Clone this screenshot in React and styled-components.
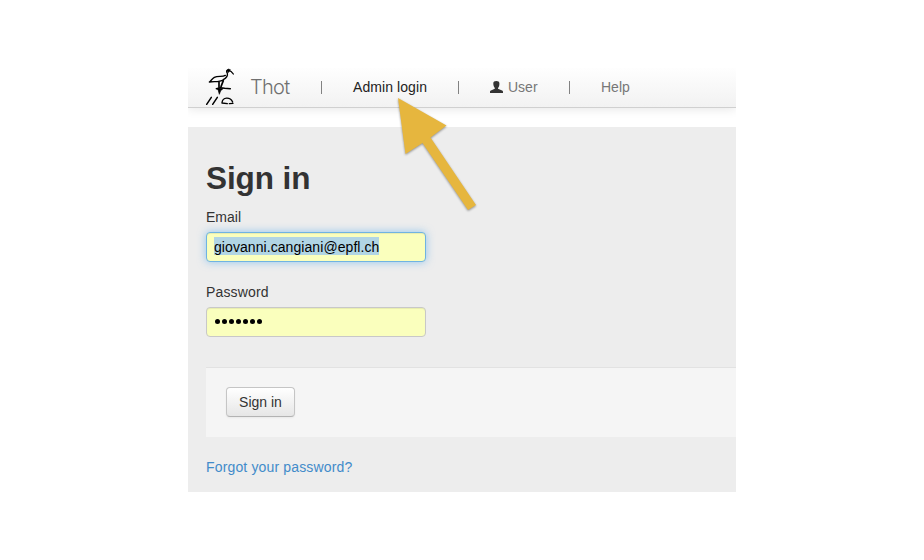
import React from "react";
import styled, { createGlobalStyle } from "styled-components";

const GlobalStyle = createGlobalStyle`
  * { box-sizing: border-box; }
  body {
    margin: 0;
    background: #fff;
    color: #333;
    font: 14px/20px "Liberation Sans", Arial, sans-serif;
  }
`;

const Page = styled.div`
  height: 560px;
  padding: 68px 188px 0;
  overflow: hidden;
`;

const Screen = styled.div`
  position: relative;
  width: 548px;
  height: 424px;
`;

const Viewport = styled.div`
  height: 100%;
  display: flex;
  flex-direction: column;
  overflow: hidden;
`;

const Navbar = styled.nav`
  display: flex;
  align-items: center;
  flex: none;
  height: 40px;
  padding: 0 0 2px 16px;
  color: #777;
  background: linear-gradient(#fefefe, #f2f2f2);
  border-bottom: 1px solid #d0d0d0;
  box-shadow: 0 1px 10px rgba(0, 0, 0, 0.1);
`;

const Logo = styled.svg`
  width: 32px;
  height: 40px;
  flex: none;
`;

const Brand = styled.span`
  width: 71px;
  margin-left: 14px;
  font-family: Inter, sans-serif;
  font-size: 20px;
  font-weight: 300;
  letter-spacing: -0.7px;
  color: #707070;
`;

const NavItem = styled.span`
  display: flex;
  align-items: center;
  width: ${(p) => p.$width}px;
  white-space: nowrap;
  letter-spacing: ${(p) => p.$spacing || 0}px;
  color: ${(p) => (p.$active ? "#222" : "#777")};
`;

const Divider = styled.span`
  width: 1px;
  height: 13px;
  margin: 1px 31px 0 0;
  background: #828282;
`;

const UserIcon = styled.svg`
  width: 13px;
  height: 12px;
  margin: 0 5px 0 0;
`;

const Panel = styled.main`
  flex: 1;
  margin-top: 19px;
  padding: 31px 0 0 18px;
  background: #ededed;
`;

const Title = styled.h1`
  margin: 0 0 9px;
  font-size: 31.5px;
  line-height: 40px;
  letter-spacing: -0.1px;
`;

const Field = styled.div`
  margin-bottom: 20px;
`;

const Label = styled.label`
  display: block;
  margin-bottom: 5px;
  letter-spacing: ${(p) => p.$spacing || 0}px;
`;

const Input = styled.div`
  display: flex;
  align-items: center;
  width: 220px;
  height: 30px;
  padding: 0 7px;
  color: #000;
  background: #faffbd;
  border: 1px solid ${(p) => (p.$focused ? "#6fb3e2" : "#c8c8c8")};
  border-radius: 4px;
  box-shadow: ${(p) =>
    p.$focused
      ? "inset 0 1px 1px rgba(0,0,0,.075), 0 0 8px rgba(82,168,236,.6)"
      : "inset 0 1px 1px rgba(0,0,0,.075)"};
`;

const Selection = styled.span`
  height: 18px;
  margin-bottom: 2px;
  line-height: 20px;
  letter-spacing: 0.07px;
  background: #b1d5e4;
`;

const Mask = styled.span`
  display: flex;
  gap: 1.6px;
  padding: 0 0 1px 1px;
`;

const Dot = styled.i`
  width: 5.4px;
  height: 5.4px;
  border-radius: 50%;
  background: #000;
`;

const Actions = styled.div`
  height: 70px;
  margin: 30px 0 20px;
  padding: 19px 20px;
  background: #f5f5f5;
  border-top: 1px solid #e2e2e2;
`;

const Button = styled.button`
  display: block;
  width: 69px;
  height: 30px;
  padding: 0;
  color: #333;
  font: inherit;
  background: linear-gradient(#fff, #e6e6e6);
  border: 1px solid #c5c5c5;
  border-bottom-color: #b3b3b3;
  border-radius: 4px;
  box-shadow: 0 1px 2px rgba(0, 0, 0, 0.05);
`;

const Link = styled.a`
  display: block;
  color: #428bca;
  letter-spacing: 0.15px;
`;

const Arrow = styled.svg`
  position: absolute;
  left: 202px;
  top: 22px;
  width: 100px;
  height: 130px;
  filter: drop-shadow(0 1px 1px rgba(0, 0, 0, 0.4));
`;

export default function App() {
  return (
    <>
      <GlobalStyle />
      <Page>
        <Screen>
          <Viewport>
            <Navbar>
              <Logo viewBox="54 21 96 120" fill="none" stroke="#000" strokeWidth="4" strokeLinecap="round" strokeLinejoin="round">
                <path d="M142 42 C138 36 133 32 128 31 C122 29 120 34 124 40 C126 47 120 54 112 59 C101 67 88 64 70 66 C76 62 77 57 85 52 C96 46 109 52 118 46" />
                <path d="M122 34 L126 27 L133 29 L128 37 Z" fill="#000" strokeWidth="2" />
                <path d="M99 66 L99 82 M112 62 L105 80" strokeWidth="5" />
                <path d="M91 86 L103 83 L116 85 L133 86" strokeWidth="4.500" />
                <path d="M94 86 L111 86 L104 92 L100 103 L97 92 Z" fill="#000" strokeWidth="2" />
                <path d="M76 112 L62 133 M94 112 L80 133" strokeWidth="4.500" />
                <path d="M108 128 C110 111 132 110 140 126 M108 129 L124 131 M130 131 L141 130" />
              </Logo>
              <Brand>Thot</Brand>
              <Divider />
              <NavItem $width={105} $active $spacing={0.08}>Admin login</NavItem>
              <Divider />
              <NavItem $width={79}>
                <UserIcon viewBox="0 0 13 12" fill="#333">
                  <path d="M3.3 2.3C3.3.7 4.4 0 6.3 0s3.1.8 3.1 2.4c0 1.9-.5 3.6-1.4 4.5v.8l4.1 1.7c.7.3.9.8.9 1.6v1H0v-1c0-.8.2-1.3.9-1.6l3.900-1.700v-.8c-1-.9-1.500-2.700-1.500-4.600z" />
                </UserIcon>
                User
              </NavItem>
              <Divider />
              <NavItem $width={40}>Help</NavItem>
            </Navbar>
            <Panel>
              <Title>Sign in</Title>
              <Field>
                <Label>Email</Label>
                <Input $focused><Selection>giovanni.cangiani@epfl.ch</Selection></Input>
              </Field>
              <Field>
                <Label $spacing={0.15}>Password</Label>
                <Input>
                  <Mask>{Array.from({ length: 7 }, (_, i) => <Dot key={i} />)}</Mask>
                </Input>
              </Field>
              <Actions><Button>Sign in</Button></Actions>
              <Link>Forgot your password?</Link>
            </Panel>
          </Viewport>
          <Arrow viewBox="390 90 100 130">
            <path d="M398 98L446.500 125.500L430.500 137.500L476 205L468 210L422.500 143L405.500 154Z" fill="#e6b63e" />
          </Arrow>
        </Screen>
      </Page>
    </>
  );
}
